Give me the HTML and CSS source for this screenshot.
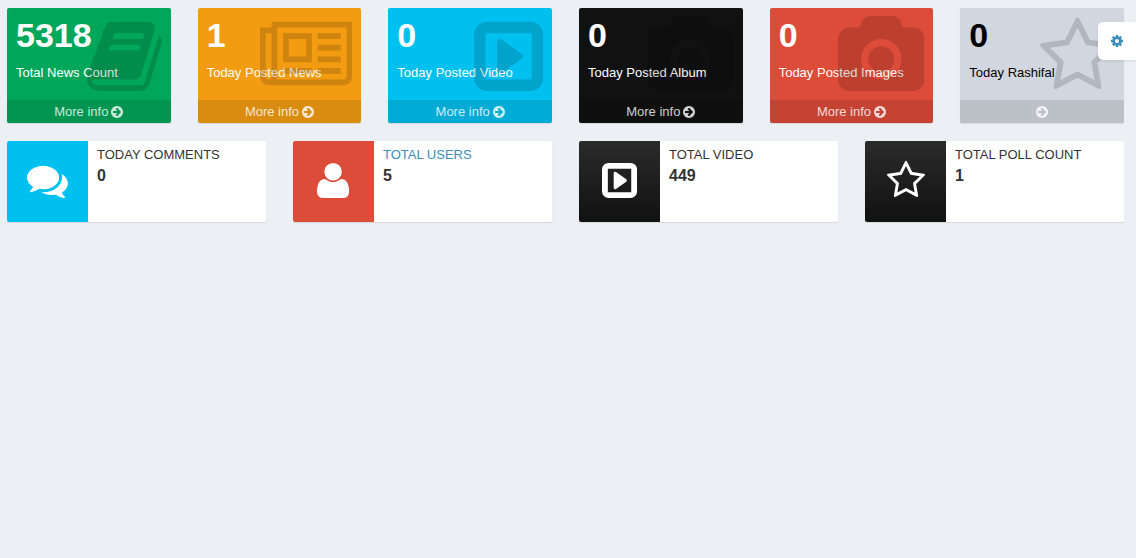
FILE: index.html
```html
<!DOCTYPE html>
<html lang="en">
  <head>
    <meta charset="utf-8">
    <meta name="viewport" content="width=device-width, initial-scale=1">
    <title>Dashboard</title>
    <link rel="stylesheet" href="styles.css">
  </head>
  <body>

    <!-- Shared icons -->
    <svg class="sprite" aria-hidden="true">
      <symbol id="arrow" viewBox="128 128 1536 1536">
        <path d="M1413 896q0-27-18-45l-91-91-362-362q-18-18-45-18t-45 18l-91 91q-18 18-18 45t18 45l189 189H448q-26 0-45 19t-19 45v128q0 26 19 45t45 19h502L761 1213q-19 19-19 45t19 45l91 91q18 18 45 18t45-18l362-362 91-91q18-18 18-45zm251 0q0 209-103 385.5T1281.5 1561 896 1664t-385.5-103T231 1281.5 128 896t103-385.5T510.5 231 896 128t385.5 103T1561 510.5 1664 896z"/>
      </symbol>
      <path id="camera" d="M960 672q119 0 203.5 84.5T1248 960t-84.5 203.5T960 1248t-203.5-84.5T672 960t84.5-203.5T960 672zm704-416q106 0 181 75t75 181v896q0 106-75 181t-181 75H256q-106 0-181-75T0 1408V512q0-106 75-181t181-75h224l51-136q19-49 69.5-84.5T704 0h512q53 0 103.5 35.5T1389 120l51 136h224zM960 1408q185 0 316.5-131.5T1408 960t-131.5-316.5T960 512 643.5 643.5 512 960t131.5 316.5T960 1408z"/>
      <path id="star" d="M1201 1004l306-297-422-62-189-382-189 382-422 62 306 297-73 421 378-199 377 199zm527-357q0 22-26 48l-363 354 86 500q1 7 1 20 0 50-41 50-19 0-40-12l-449-236-449 236q-22 12-40 12-21 0-31.5-14.5T365 1569q0-6 2-20l86-500L89 695q-25-27-25-48 0-37 56-46l502-73 225-455q19-41 49-41t49 41l225 455 502 73q56 9 56 46z"/>
      <path id="play" fill-rule="evenodd" d="M288 128h960q119 0 203.500 84.500T1536 416v960q0 119-84.500 203.500T1248 1664H288q-119 0-203.500-84.500T0 1376V416q0-119 84.500-203.500T288 128zM256 384v1024h1024V384zM1088 896q0 33-27 52l-448 320q-31 23-66 4-35-17-35-56V576q0-39 35-57 35-17 66 5l448 320q27 19 27 52z"/>
    </svg>

    <!-- Settings Button -->
    <button type="button" class="settings-button" aria-label="Settings">
      <svg viewBox="128 128 1536 1536"><path d="M1152 896q0-106-75-181t-181-75-181 75-75 181 75 181 181 75 181-75 75-181zm512-109v222q0 12-8 23t-20 13l-185 28q-19 54-39 91 35 50 107 138 10 12 10 25t-9 23q-27 37-99 108t-94 71q-12 0-26-9l-138-108q-44 23-91 38-16 136-29 186-7 28-36 28H785q-14 0-24.500-8.500T749 1642l-28-184q-49-16-90-37l-141 107q-10 9-25 9-14 0-25-11-126-114-165-168-7-10-7-23 0-12 8-23 15-21 51-66.500t54-70.500q-27-50-41-99l-183-27q-13-2-21-12.500t-8-23.500V783q0-12 8-23t19-13l186-28q14-46 39-92-40-57-107-138-10-12-10-24 0-10 9-23 26-36 98.500-107.500T465 263q13 0 26 10l138 107q44-23 91-38 16-136 29-186 7-28 36-28h222q14 0 24.500 8.500T1043 150l28 184q49 16 90 37l142-107q9-9 24-9 13 0 25 10 129 119 165 170 7 8 7 22 0 12-8 23-15 21-51 66.500t-54 70.500q26 50 41 98l183 28q13 2 21 12.500t8 23.500z"/></svg>
    </button>

    <main class="content">

      <!-- Small Boxes -->
      <section class="small-boxes">
        <div class="small-box bg-green">
          <div class="inner">
            <h3>5318</h3>
            <p>Total News Count</p>
          </div>
          <svg class="icon" viewBox="64 0 1664 1664"><path d="M1703 478q40 57 18 129l-275 906q-19 64-76.500 107.500T1247 1664H324q-77 0-148.500-53.500T76 1479q-24-67-2-127 0-4 3-27t4-37q1-8-3-21.500t-3-19.500q2-11 8-21t16.500-23.500T116 1179q23-38 45-91.500t30-91.500q3-10 .5-30t-.5-28q3-11 17-28t17-23q21-36 42-92t25-90q1-9-2.500-32t.5-28q4-13 22-30.500t22-22.500q19-26 42.500-84.500T404 411q1-8-3-25.500t-2-26.500q2-8 9-18t18-23 17-21q8-12 16.500-30.500t15-35 16-36 19.500-32 26.500-23.500 36-11.500T620 134l-1 3q38-9 51-9h761q74 0 114 56t18 130l-274 906q-36 119-71.500 153.500T1089 1408H220q-27 0-38 15-11 16-1 43 24 70 144 70h923q29 0 56-15.500t35-41.500l300-987q7-22 5-57 38 15 59 43zm-1064 2q-4 13 2 22.500t20 9.500h608q13 0 25.500-9.500T1311 480l21-64q4-13-2-22.500t-20-9.500H702q-13 0-25.500 9.500T660 416zm-83 256q-4 13 2 22.500t20 9.500h608q13 0 25.500-9.500T1228 736l21-64q4-13-2-22.500t-20-9.500H619q-13 0-25.500 9.500T577 672z"/></svg>
          <a href="#" class="small-box-footer">More info <svg><use href="#arrow"/></svg></a>
        </div>

        <div class="small-box bg-yellow">
          <div class="inner">
            <h3>1</h3>
            <p>Today Posted News</p>
          </div>
          <svg class="icon" viewBox="0 0 2048 1664"><path d="M1024 512H640v384h384V512zm128 640v128H512v-128h640zm0-768v640H512V384h640zm640 768v128h-512v-128h512zm0-256v128h-512V896h512zm0-256v128h-512V640h512zm0-256v128h-512V384h512zM256 1344V384H128v960q0 26 19 45t45 19 45-19 19-45zm1664 0V256H384v1088q0 33-11 64h1483q26 0 45-19t19-45zM2048 128v1216q0 80-56 136t-136 56H192q-80 0-136-56T0 1344V256h256V128h1792z"/></svg>
          <a href="#" class="small-box-footer">More info <svg><use href="#arrow"/></svg></a>
        </div>

        <div class="small-box bg-aqua">
          <div class="inner">
            <h3>0</h3>
            <p>Today Posted Video</p>
          </div>
          <svg class="icon" viewBox="0 0 1536 1664"><use href="#play"/></svg>
          <a href="#" class="small-box-footer">More info <svg><use href="#arrow"/></svg></a>
        </div>

        <div class="small-box bg-black">
          <div class="inner">
            <h3>0</h3>
            <p>Today Posted Album</p>
          </div>
          <svg class="icon" viewBox="0 0 1920 1664"><use href="#camera"/></svg>
          <a href="#" class="small-box-footer">More info <svg><use href="#arrow"/></svg></a>
        </div>

        <div class="small-box bg-red">
          <div class="inner">
            <h3>0</h3>
            <p>Today Posted Images</p>
          </div>
          <svg class="icon" viewBox="0 0 1920 1664"><use href="#camera"/></svg>
          <a href="#" class="small-box-footer">More info <svg><use href="#arrow"/></svg></a>
        </div>

        <div class="small-box bg-gray">
          <div class="inner">
            <h3>0</h3>
            <p>Today Rashifal</p>
          </div>
          <svg class="icon" viewBox="64 0 1664 1664"><use href="#star"/></svg>
          <a href="#" class="small-box-footer" aria-label="Rashifal"><svg><use href="#arrow"/></svg></a>
        </div>
      </section>

      <!-- Info Boxes -->
      <section class="info-boxes">
        <div class="info-box">
          <span class="info-box-icon bg-aqua">
            <svg viewBox="0 0 1792 1664"><path d="M1408 768q0 139-94 257t-256.500 186.500T704 1280q-86 0-176-16-124 88-278 128-36 9-86 16h-3q-11 0-20.500-8t-11.500-21q-1-3-1-6.500t.5-6.500 2-6l2.500-5 3.500-5.500 4-5 4.500-5 4-4.500q5-6 23-25t26-29.500 22.500-29 25-38.500 20.500-44q-124-72-195-177T0 768q0-139 94-257t256.500-186.500T704 256t353.500 68.500T1314 511t94 257zm384 256q0 120-71 224.500T1526 1425q10 24 20.500 44t25 38.500 22.500 29 26 29.500 23 25q1 1 4 4.500t4.500 5 4 5 3.500 5.500l2.500 5 2 6 .5 6.500-1 6.500q-3 14-13 22t-22 7q-50-7-86-16-154-40-278-128-90 16-176 16-271 0-472-132 58 4 88 4 161 0 309-45t264-129q125-92 192-212t67-254q0-77-23-152 129 71 204 178t75 230z"/></svg>
          </span>
          <div class="info-box-content">
            <span class="info-box-text">Today Comments</span>
            <span class="info-box-number">0</span>
          </div>
        </div>

        <div class="info-box">
          <span class="info-box-icon bg-red">
            <svg viewBox="192 0 1408 1664"><path d="M1600 1405q0 120-73 189.500t-194 69.500H459q-121 0-194-69.500T192 1405q0-53 3.500-103.500t14-109T236 1084t43-97.500 62-81 85.500-53.500T538 832q9 0 42 21.500t74.500 48 108 48T896 971t133.500-21.500 108-48 74.500-48 42-21.500q61 0 111.500 20t85.500 53.500 62 81 43 97.500 26.500 108.500 14 109 3.500 103.500zm-320-893q0 159-112.500 271.500T896 896 624.500 783.500 512 512t112.500-271.500T896 128t271.500 112.500T1280 512z"/></svg>
          </span>
          <div class="info-box-content">
            <a href="#" class="info-box-text">Total Users</a>
            <span class="info-box-number">5</span>
          </div>
        </div>

        <div class="info-box">
          <span class="info-box-icon bg-black-gradient">
            <svg viewBox="0 0 1536 1664"><use href="#play"/></svg>
          </span>
          <div class="info-box-content">
            <span class="info-box-text">Total Video</span>
            <span class="info-box-number">449</span>
          </div>
        </div>

        <div class="info-box">
          <span class="info-box-icon bg-black-gradient">
            <svg viewBox="64 0 1664 1664"><use href="#star"/></svg>
          </span>
          <div class="info-box-content">
            <span class="info-box-text">Total Poll Count</span>
            <span class="info-box-number">1</span>
          </div>
        </div>
      </section>

    </main>
  </body>
</html>
```
FILE: styles.css
```css
* {
  box-sizing: border-box;
}

body {
  margin: 0;
  background-color: #ecf0f5;
  color: #333;
  font-family: "Liberation Sans", Arial, sans-serif;
  font-size: 13px;
  line-height: 18px;
}

a {
  color: #3c8dbc;
  text-decoration: none;
}

svg {
  fill: currentColor;
}

.sprite {
  position: absolute;
  width: 0;
  height: 0;
}

.content {
  display: flex;
  flex-direction: column;
  gap: 18px;
  padding: 8px 12px 8px 7px;
}

/* Backgrounds */
.bg-green {
  background-color: #00a65a;
}

.bg-yellow {
  background-color: #f39c12;
}

.bg-aqua {
  background-color: #00c0ef;
}

.bg-black {
  background-color: #111;
}

.bg-red {
  background-color: #dd4b39;
}

.bg-gray {
  background-color: #d2d6de;
}

.bg-black-gradient {
  background: linear-gradient(to top, #111, #2b2b2b);
}

/* Small boxes */
.small-boxes {
  display: grid;
  grid-template-columns: repeat(6, 1fr);
  gap: 27px;
}

.small-box {
  position: relative;
  border-radius: 2px;
  overflow: hidden;
  color: #fff;
  box-shadow: 0 1px 1px rgba(0, 0, 0, 0.1);
}

.small-box.bg-gray {
  color: #000;
}

.small-box .inner {
  padding: 9px;
}

.small-box h3 {
  margin: 0 0 11px;
  font-size: 34px;
  line-height: 36px;
}

.small-box p {
  margin: 0 0 9px;
}

.small-box .icon {
  position: absolute;
  top: 8px;
  right: 9px;
  height: 75px;
  color: rgba(0, 0, 0, 0.15);
}

.small-box-footer {
  position: relative;
  display: flex;
  justify-content: center;
  align-items: center;
  gap: 3px;
  height: 23px;
  background-color: rgba(0, 0, 0, 0.1);
  color: rgba(255, 255, 255, 0.8);
}

.small-box-footer:hover {
  background-color: rgba(0, 0, 0, 0.15);
  color: #fff;
}

.small-box-footer svg {
  width: 12px;
  height: 12px;
}

/* Info boxes */
.info-boxes {
  display: grid;
  grid-template-columns: repeat(4, 1fr);
  gap: 27px;
}

.info-box {
  display: flex;
  min-height: 81px;
  border-radius: 2px;
  overflow: hidden;
  background-color: #fff;
  box-shadow: 0 1px 1px rgba(0, 0, 0, 0.1);
}

.info-box-icon {
  display: flex;
  justify-content: center;
  align-items: center;
  width: 81px;
  padding-bottom: 5px;
  color: #fff;
}

.info-box-icon svg {
  height: 38px;
}

.info-box-content {
  display: flex;
  flex-direction: column;
  align-items: flex-start;
  gap: 3px;
  padding: 5px 9px;
}

.info-box-text {
  text-transform: uppercase;
}

.info-box-number {
  font-size: 16px;
  font-weight: bold;
}

/* Settings button */
.settings-button {
  position: fixed;
  top: 22px;
  right: 0;
  z-index: 10;
  display: flex;
  padding: 13px;
  border: none;
  border-radius: 5px 0 0 5px;
  background-color: #fff;
  color: #3c8dbc;
  box-shadow: 0 1px 3px rgba(0, 0, 0, 0.1);
  cursor: pointer;
}

.settings-button svg {
  width: 12px;
  height: 12px;
}
```
